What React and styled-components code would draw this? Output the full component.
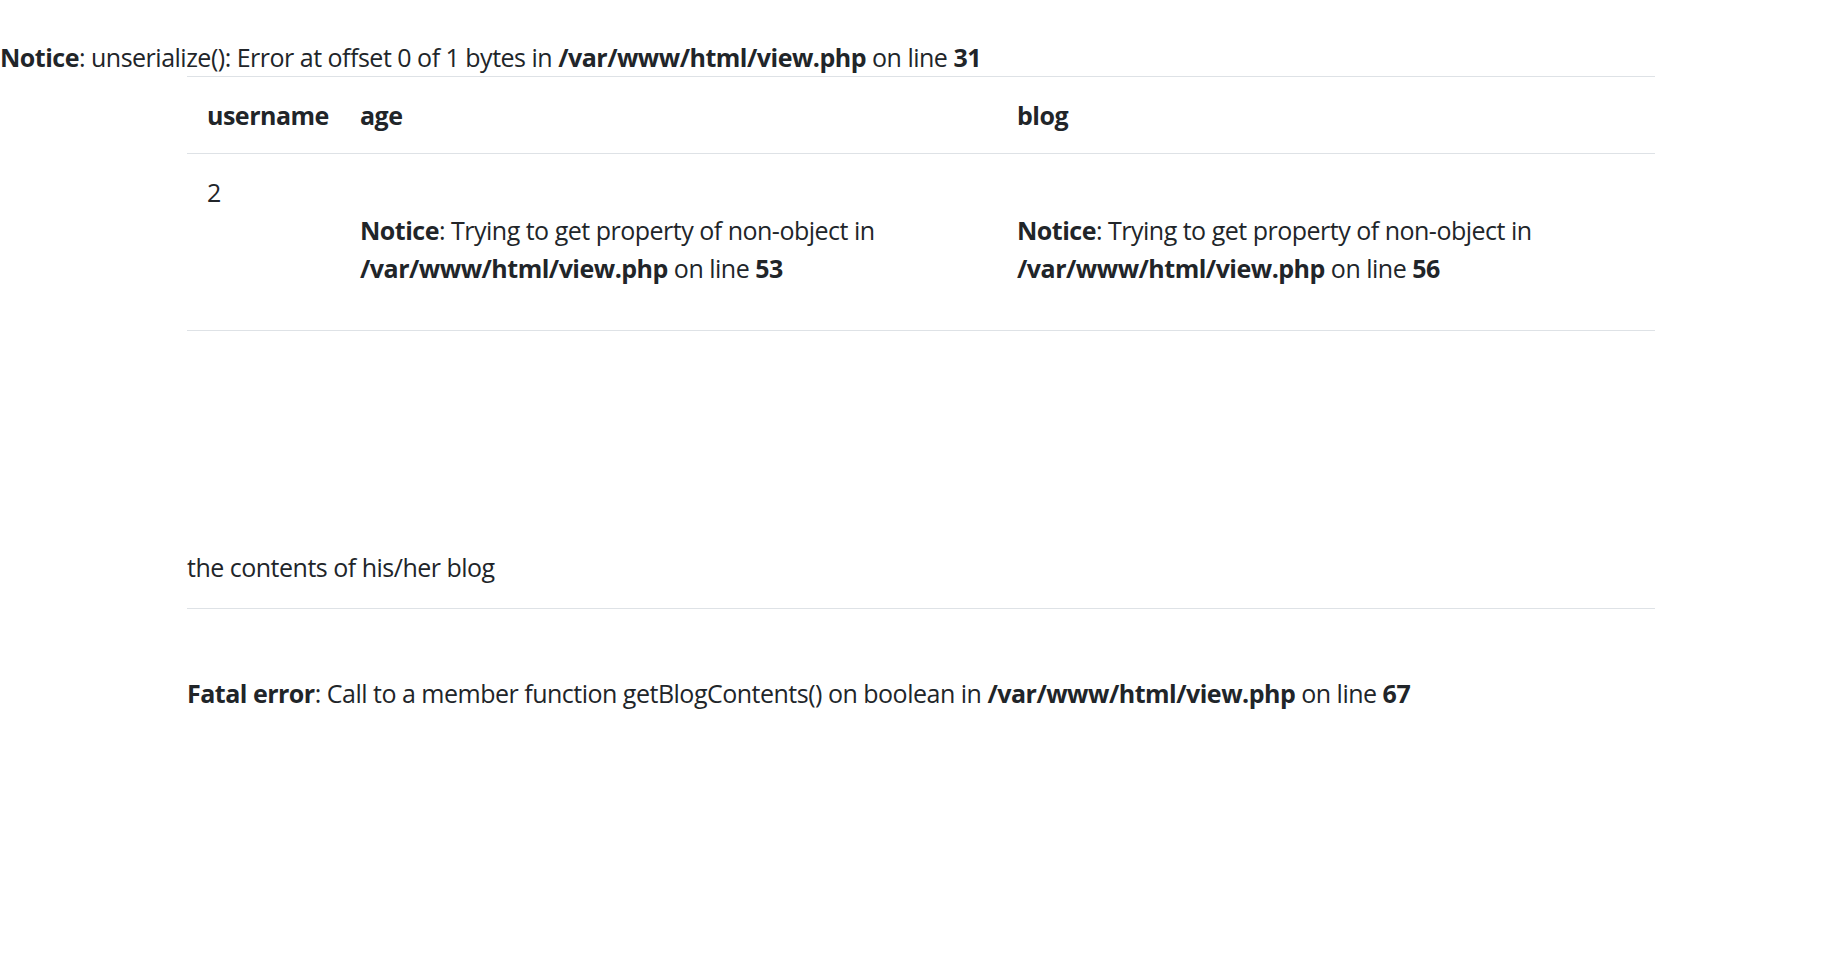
import React from "react";
import styled, { createGlobalStyle } from "styled-components";

const GlobalStyle = createGlobalStyle`
  html, body {
    margin: 0;
    padding: 0;
    background: #fff;
  }
  body {
    font-family: "Open Sans", "Noto Sans", "Liberation Sans", sans-serif;
    font-size: 25px;
    line-height: 38px;
    color: #212529;
    letter-spacing: -0.5px;
  }
  b {
    font-weight: 700;
  }
`;

const PhpMessage = styled.div`
  margin: 0;
`;

const Container = styled.div`
  width: 1468px;
  margin: 0 auto;
`;

const Table = styled.table`
  width: 100%;
  border-collapse: collapse;
  table-layout: fixed;
  border-bottom: 1px solid #dee2e6;
`;

const Th = styled.th`
  box-sizing: border-box;
  width: ${(props) => props.$w || "auto"};
  padding: 19px 20px;
  text-align: left;
  vertical-align: top;
  font-weight: 700;
  border-top: 1px solid #dee2e6;
`;

const Td = styled.td`
  padding: 19px 20px 43px;
  vertical-align: top;
  border-top: 1px solid #dee2e6;
`;

const BlogText = styled.p`
  margin: 217px 0 0;
`;

const Divider = styled.hr`
  margin: 22px 0 27px;
  border: 0;
  border-top: 1px solid #dee2e6;
`;

function Notice({ line }) {
  return (
    <>
      <br />
      <b>Notice</b>: Trying to get property of non-object in{" "}
      <b>/var/www/html/view.php</b> on line <b>{line}</b>
      <br />
    </>
  );
}

export default function App() {
  return (
    <>
      <GlobalStyle />
      <PhpMessage>
        <br />
        <b>Notice</b>: unserialize(): Error at offset 0 of 1 bytes in{" "}
        <b>/var/www/html/view.php</b> on line <b>31</b>
      </PhpMessage>
      <Container>
        <Table>
          <thead>
            <tr>
              <Th $w="153px">username</Th>
              <Th $w="657px">age</Th>
              <Th>blog</Th>
            </tr>
          </thead>
          <tbody>
            <tr>
              <Td>2</Td>
              <Td>
                <Notice line={53} />
              </Td>
              <Td>
                <Notice line={56} />
              </Td>
            </tr>
          </tbody>
        </Table>
        <BlogText>the contents of his/her blog</BlogText>
        <Divider />
        <PhpMessage>
          <br />
          <b>Fatal error</b>: Call to a member function getBlogContents() on
          boolean in <b>/var/www/html/view.php</b> on line <b>67</b>
          <br />
        </PhpMessage>
      </Container>
    </>
  );
}
